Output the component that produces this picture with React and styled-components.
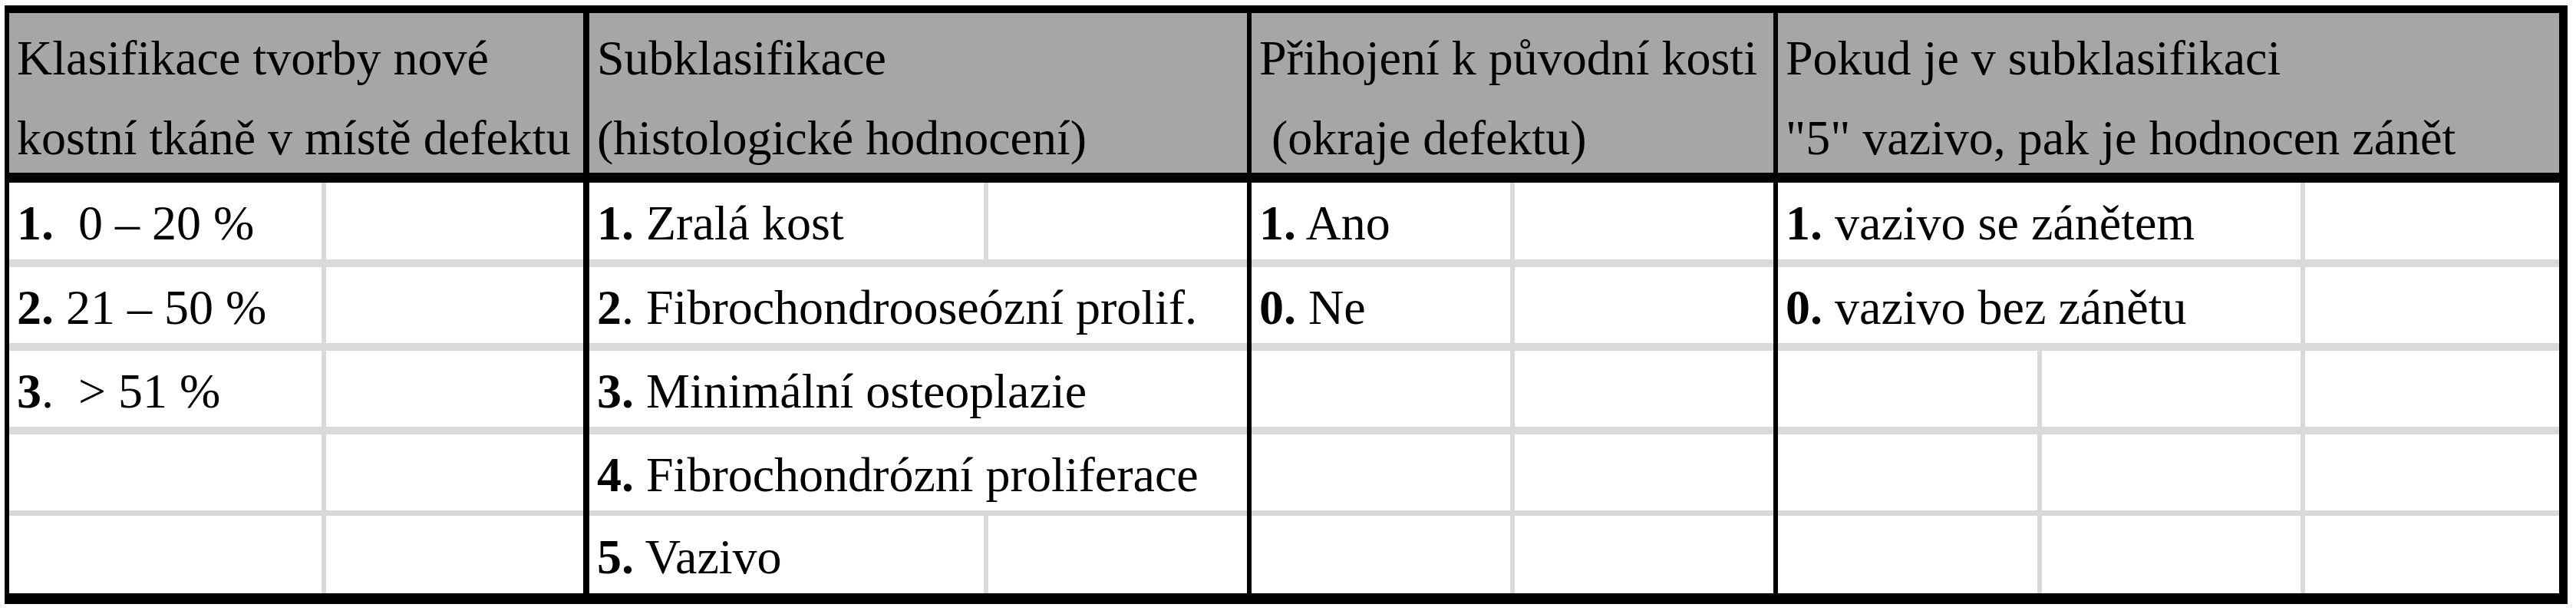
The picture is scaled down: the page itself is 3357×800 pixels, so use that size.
import React from 'react';
import styled, { createGlobalStyle } from 'styled-components';

const GlobalStyle = createGlobalStyle`
  html, body {
    margin: 0;
    background: #fff;
  }
  body {
    font-family: "Liberation Serif", "Times New Roman", serif;
    color: #000;
  }
`;

const Page = styled.div`
  padding: 7px 0 0 6px;
`;

const Table = styled.div`
  box-sizing: content-box;
  width: 3323px;
  border: solid #000;
  border-width: 10px 11px 14px 6px;
  display: grid;
  grid-template-columns: 748px 865px 686px 1024px;
`;

const Group = styled.section`
  box-sizing: border-box;
  border-left: ${p => p.$divider}px solid #000;
  display: flex;
  flex-direction: column;
`;

const HeaderCell = styled.div`
  box-sizing: border-box;
  height: 221px;
  padding: 7px 0 0 10px;
  background: #a6a6a6;
  border-bottom: 13px solid #000;
  font-size: 64px;
  line-height: 104px;
  white-space: nowrap;
`;

const Row = styled.div`
  display: grid;
  grid-template-columns: ${p => p.$cols};
  height: ${p => p.$height}px;
  border-top: ${p => p.$line}px solid #d9d9d9;
`;

const Cell = styled.div`
  display: flex;
  align-items: center;
  padding: 6px 0 0 10px;
  font-size: 64px;
  white-space: nowrap;

  & + & {
    border-left: 6px solid #d9d9d9;
  }
`;

const Num = styled.b`
  font-weight: 700;
`;

// row heights and separator thickness, shared by every group
const rowBox = [
  { height: 100, line: 0 },
  { height: 99, line: 10 },
  { height: 99, line: 10 },
  { height: 99, line: 10 },
  { height: 101, line: 7 },
];

const groups = [
  {
    divider: 0,
    header: ['Klasifikace tvorby nové', 'kostní tkáně v místě defektu'],
    rows: [
      { cols: '407px 341px', cells: [[['1.'], '\u00a0 0 – 20 %'], null] },
      { cols: '407px 341px', cells: [[['2.'], ' 21 – 50 %'], null] },
      { cols: '407px 341px', cells: [[['3', '.'], '\u00a0 > 51 %'], null] },
      { cols: '407px 341px', cells: [null, null] },
      { cols: '407px 341px', cells: [null, null] },
    ],
  },
  {
    divider: 8,
    header: ['Subklasifikace', '(histologické hodnocení)'],
    rows: [
      { cols: '514px 343px', cells: [[['1.'], ' Zralá kost'], null] },
      { cols: '857px', cells: [[['2', '.'], ' Fibrochondrooseózní prolif.']] },
      { cols: '857px', cells: [[['3.'], ' Minimální osteoplazie']] },
      { cols: '857px', cells: [[['4.'], ' Fibrochondrózní proliferace']] },
      { cols: '514px 343px', cells: [[['5.'], ' Vazivo'], null] },
    ],
  },
  {
    divider: 6,
    header: ['Přihojení k původní kosti', '\u00a0(okraje defektu)'],
    rows: [
      { cols: '337px 343px', cells: [[['1.'], ' Ano'], null] },
      { cols: '337px 343px', cells: [[['0.'], ' Ne'], null] },
      { cols: '337px 343px', cells: [null, null] },
      { cols: '337px 343px', cells: [null, null] },
      { cols: '337px 343px', cells: [null, null] },
    ],
  },
  {
    divider: 6,
    header: ['Pokud je v subklasifikaci', '"5" vazivo, pak je hodnocen zánět'],
    rows: [
      { cols: '681px 337px', cells: [[['1.'], ' vazivo se zánětem'], null] },
      { cols: '681px 337px', cells: [[['0.'], ' vazivo bez zánětu'], null] },
      { cols: '338px 343px 337px', cells: [null, null, null] },
      { cols: '338px 343px 337px', cells: [null, null, null] },
      { cols: '338px 343px 337px', cells: [null, null, null] },
    ],
  },
];

const CellText = ({ value }) => {
  if (!value) return null;
  const [[bold, plain = ''], rest] = value;
  return (
    <span>
      <Num>{bold}</Num>{plain}{rest}
    </span>
  );
};

const App = () => (
  <Page>
    <GlobalStyle />
    <Table>
      {groups.map((g, gi) => (
        <Group key={gi} $divider={g.divider}>
          <HeaderCell>
            {g.header[0]}<br />{g.header[1]}
          </HeaderCell>
          {g.rows.map((r, ri) => (
            <Row key={ri} $cols={r.cols} $height={rowBox[ri].height} $line={rowBox[ri].line}>
              {r.cells.map((c, ci) => (
                <Cell key={ci}>
                  <CellText value={c} />
                </Cell>
              ))}
            </Row>
          ))}
        </Group>
      ))}
    </Table>
  </Page>
);

export default App;
